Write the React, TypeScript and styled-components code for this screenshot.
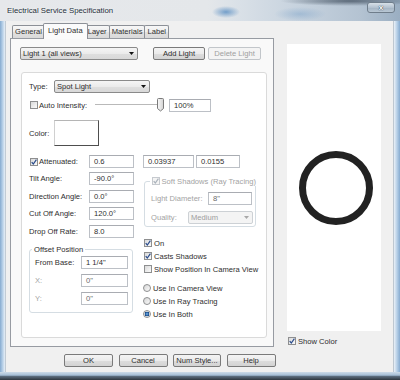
import React from 'react'
import styled, { createGlobalStyle } from 'styled-components'

const GlobalStyle = createGlobalStyle`
    * { box-sizing: border-box; }
    html, body { margin: 0; padding: 0; background: #ffffff; }
    body {
        font-family : "Liberation Sans", Arial, sans-serif;
        font-size   : 7.6px;
        color       : #2e2e2e;
    }
`

const tabs = ['General', 'Light Data', 'Layer', 'Materials', 'Label']

const ArrowDown = ({ color = '#111' }: { color?: string }) => (
    <svg width="5" height="3" viewBox="0 0 5 3">
        <path d="M0 0 H5 L2.5 3 Z" fill={color} />
    </svg>
)

const CheckBox = ({ checked, disabled }: { checked?: boolean; disabled?: boolean }) => (
    <Box $disabled={disabled}>
        {checked && (
            <svg width="6" height="6" viewBox="0 0 6 6">
                <path d="M0.7 3.2 L2.3 5 L5.4 0.7" fill="none" stroke={disabled ? '#aab2bb' : '#2a4c8c'} strokeWidth="1.2" />
            </svg>
        )}
    </Box>
)

const Slider = () => (
    <svg width="70" height="14" viewBox="0 0 70 14">
        <rect x="0" y="6" width="63" height="1" fill="#b9b9b9" />
        <rect x="0" y="7" width="63" height="1" fill="#ffffff" />
        <defs>
            <linearGradient id="thumb" x1="0" x2="1" y1="0" y2="0">
                <stop offset="0" stopColor="#fafafa" />
                <stop offset="1" stopColor="#d2d2d2" />
            </linearGradient>
        </defs>
        <path d="M62.5 1.5 Q62.5 0.5 63.5 0.5 H67.5 Q68.5 0.5 68.5 1.5 V10.5 L65.5 13 L62.5 10.5 Z" fill="url(#thumb)" stroke="#7a7a7a" strokeWidth="1" />
    </svg>
)

export default function App() {
    return (
        <>
            <GlobalStyle />
            <Window>
                <TitleBar>
                    <Title>Electrical Service Specification</Title>
                    <CloseButton>x</CloseButton>
                </TitleBar>
                <Frame>
                    <SideEdge $side="left" />
                    <Client>
                        <MainRow>
                            <TabArea>
                                <TabStrip>
                                    {tabs.map(t => (
                                        <Tab key={t} $active={t === 'Light Data'}>{t}</Tab>
                                    ))}
                                </TabStrip>
                                <Panel>
                                    <TopRow>
                                        <Combo $w={118}>
                                            <span>Light 1 (all views)</span>
                                            <ArrowDown />
                                        </Combo>
                                        <Button $w={52} $ml={15}>Add Light</Button>
                                        <Button $w={53} $ml={3} $disabled>Delete Light</Button>
                                    </TopRow>
                                    <Card>
                                        <Row $h={13}>
                                            <Label $w={25}>Type:</Label>
                                            <Combo $w={96}>
                                                <span>Spot Light</span>
                                                <ArrowDown />
                                            </Combo>
                                        </Row>
                                        <Row $h={14} $mt={5}>
                                            <CheckLabel $w={65} $ml={1}>
                                                <CheckBox />
                                                <span>Auto Intensity:</span>
                                            </CheckLabel>
                                            <Slider />
                                            <TextBox $w={42} $ml={4}>100%</TextBox>
                                        </Row>
                                        <Row $h={26} $mt={8}>
                                            <Label $w={25}>Color:</Label>
                                            <Swatch />
                                        </Row>
                                        <Row $h={13} $mt={9}>
                                            <CheckLabel $w={59} $ml={1}>
                                                <CheckBox checked />
                                                <span>Attenuated:</span>
                                            </CheckLabel>
                                            <TextBox $w={45}>0.6</TextBox>
                                            <TextBox $w={51} $ml={9}>0.03937</TextBox>
                                            <TextBox $w={44} $ml={2}>0.0155</TextBox>
                                        </Row>
                                        <Columns>
                                            <LeftCol>
                                                <Row $h={13}>
                                                    <Label $w={60}>Tilt Angle:</Label>
                                                    <TextBox $w={45}>-90.0°</TextBox>
                                                </Row>
                                                <Row $h={13}>
                                                    <Label $w={60}>Direction Angle:</Label>
                                                    <TextBox $w={45}>0.0°</TextBox>
                                                </Row>
                                                <Row $h={13}>
                                                    <Label $w={60}>Cut Off Angle:</Label>
                                                    <TextBox $w={45}>120.0°</TextBox>
                                                </Row>
                                                <Row $h={13}>
                                                    <Label $w={60}>Drop Off Rate:</Label>
                                                    <TextBox $w={45}>8.0</TextBox>
                                                </Row>
                                                <Group $w={104} $mt={2.5} $pad="2.5px 4px 7px 5px" $gap={5}>
                                                    <Legend>Offset Position</Legend>
                                                    <Row $h={13}>
                                                        <Label $w={46}>From Base:</Label>
                                                        <TextBox $w={47}>1 1/4"</TextBox>
                                                    </Row>
                                                    <Row $h={13}>
                                                        <Label $w={46} $disabled>X:</Label>
                                                        <TextBox $w={47} $dim>0"</TextBox>
                                                    </Row>
                                                    <Row $h={13}>
                                                        <Label $w={46} $disabled>Y:</Label>
                                                        <TextBox $w={47} $dim>0"</TextBox>
                                                    </Row>
                                                </Group>
                                            </LeftCol>
                                            <RightCol>
                                                <Group $w={112} $mt={4.5} $pad="6.5px 3px 2px 6px" $gap={6}>
                                                    <Legend $check>
                                                        <CheckBox checked disabled />
                                                        <DimText>Soft Shadows (Ray Tracing)</DimText>
                                                    </Legend>
                                                    <Row $h={13}>
                                                        <Label $w={57} $disabled>Light Diameter:</Label>
                                                        <TextBox $w={44} $dim>8"</TextBox>
                                                    </Row>
                                                    <Row $h={13}>
                                                        <Label $w={37} $disabled>Quality:</Label>
                                                        <Combo $w={65} $disabled>
                                                            <span>Medium</span>
                                                            <ArrowDown color="#a8a8a8" />
                                                        </Combo>
                                                    </Row>
                                                </Group>
                                                <OptionList $mt={11.5}>
                                                    <Option><CheckBox checked /><span>On</span></Option>
                                                    <Option><CheckBox checked /><span>Casts Shadows</span></Option>
                                                    <Option><CheckBox /><span>Show Position In Camera View</span></Option>
                                                </OptionList>
                                                <OptionList $mt={10} $shift={-1}>
                                                    <Option><RadioDot /><span>Use In Camera View</span></Option>
                                                    <Option><RadioDot /><span>Use In Ray Tracing</span></Option>
                                                    <Option><RadioDot $selected /><span>Use In Both</span></Option>
                                                </OptionList>
                                            </RightCol>
                                        </Columns>
                                    </Card>
                                </Panel>
                            </TabArea>
                            <PreviewCol>
                                <Preview>
                                    <svg width="78" height="78" viewBox="0 0 78 78">
                                        <circle cx="39" cy="39" r="33.5" fill="none" stroke="#222222" strokeWidth="7" />
                                    </svg>
                                </Preview>
                                <Option $ml={1} $mt={5.5}>
                                    <CheckBox checked />
                                    <span>Show Color</span>
                                </Option>
                            </PreviewCol>
                        </MainRow>
                        <ButtonRow>
                            <Button $w={49}>OK</Button>
                            <Button $w={49}>Cancel</Button>
                            <Button $w={48}>Num Style...</Button>
                            <Button $w={49}>Help</Button>
                        </ButtonRow>
                    </Client>
                    <SideEdge $side="right" />
                </Frame>
                <BottomEdge />
            </Window>
        </>
    )
}

const Window = styled.div`
    width          : 400px;
    height         : 380px;
    display        : flex;
    flex-direction : column;
    overflow       : hidden;
    background     : #f0f0f0;
`

const TitleBar = styled.div`
    height          : 21px;
    flex            : none;
    display         : flex;
    align-items     : center;
    justify-content : space-between;
    padding         : 0 5px 0 7px;
    background      :
        radial-gradient(ellipse 14px 6px at 226px 12px, rgba(96, 146, 196, 0.85), rgba(96, 146, 196, 0)),
        radial-gradient(ellipse 26px 7px at 300px 14px, rgba(120, 160, 200, 0.45), rgba(120, 160, 200, 0)),
        radial-gradient(ellipse 70px 5px at 350px 1px, rgba(60, 74, 90, 0.75), rgba(60, 74, 90, 0)),
        linear-gradient(90deg, #e6e8eb 0%, #e4e7ea 52%, #d9e0e7 60%, #c6d2de 75%, #b4c3d2 90%, #9aaec2 100%);
`

const Title = styled.div`
    font-size   : 7.8px;
    color       : #26313b;
    text-shadow : 0 0 3px rgba(255, 255, 255, 0.9);
`

const CloseButton = styled.div`
    align-self      : flex-start;
    margin-top      : 2px;
    width           : 28px;
    height          : 11px;
    display         : flex;
    align-items     : center;
    justify-content : center;
    border          : 1px solid #6f7d8b;
    border-radius   : 3px;
    background      : linear-gradient(#d7e0e8, #b4c2d0 50%, #a3b3c3 51%, #b9c7d4);
    color           : #ffffff;
    font-weight     : bold;
    font-size       : 8px;
    line-height     : 8px;
    text-shadow     : 0 0 1px #2c3a48, 0 0 1px #2c3a48;
`

const Frame = styled.div`
    flex    : 1;
    display : flex;
`

const SideEdge = styled.div<{ $side: 'left' | 'right' }>`
    width      : ${p => (p.$side === 'left' ? 6 : 7)}px;
    flex       : none;
    background : ${p => p.$side === 'left'
        ? 'linear-gradient(90deg, #86abd0 0%, #b9d1e8 45%, #e3ecf5 80%, #a9b3bd 100%)'
        : 'linear-gradient(90deg, #a9b3bd 0%, #e3ecf5 20%, #b9d1e8 55%, #86abd0 100%)'};
`

const BottomEdge = styled.div`
    height     : 8px;
    flex       : none;
    background : linear-gradient(180deg, #cddbe8 0%, #a4bdd5 40%, #5b6c7d 55%, #2e363e 100%);
`

const Client = styled.div`
    flex           : 1;
    display        : flex;
    flex-direction : column;
    padding        : 2px 0 0 4px;
    background     : #f0f0f0;
`

const MainRow = styled.div`
    height  : 324px;
    display : flex;
`

const TabArea = styled.div`
    width          : 264px;
    display        : flex;
    flex-direction : column;
`

const TabStrip = styled.div`
    height       : 15px;
    display      : flex;
    align-items  : flex-end;
    padding-left : 2px;
`

const Tab = styled.div<{ $active?: boolean }>`
    height        : ${p => (p.$active ? 16 : 13)}px;
    padding       : 0 ${p => (p.$active ? 4 : 2)}px;
    margin        : ${p => (p.$active ? '0 -2px -1px -2px' : '0 0 0 -1px')};
    line-height   : ${p => (p.$active ? 14 : 12)}px;
    text-align    : center;
    border        : 1px solid #8c9097;
    border-bottom : none;
    border-radius : 2px 2px 0 0;
    background    : ${p => (p.$active ? '#fbfbfb' : 'linear-gradient(#f7f7f7, #ededed 50%, #e1e1e1 51%, #d9d9d9)')};
    position      : relative;
    z-index       : ${p => (p.$active ? 1 : 0)};

    &:first-child { margin-left : 0; }
`

const Panel = styled.div`
    flex           : 1;
    display        : flex;
    flex-direction : column;
    border         : 1px solid #979ba2;
    background     : #f9f9f9;
    padding        : 8px 6px 8px 9px;
`

const TopRow = styled.div`
    height  : 13px;
    display : flex;
`

const Card = styled.div`
    flex           : 1;
    margin         : 12px 0 0 1px;
    width          : 246px;
    display        : flex;
    flex-direction : column;
    padding        : 7px 0 0 7px;
    border         : 1px solid #dadada;
    border-radius  : 3px;
    background     : #ffffff;
`

const Row = styled.div<{ $h: number; $mt?: number }>`
    height      : ${p => p.$h}px;
    margin-top  : ${p => p.$mt ?? 0}px;
    display     : flex;
    align-items : center;
    flex        : none;
`

const Label = styled.span<{ $w: number; $disabled?: boolean }>`
    width       : ${p => p.$w}px;
    flex        : none;
    white-space : nowrap;
    color       : ${p => (p.$disabled ? '#a3a3a3' : '#2e2e2e')};
`

const DimText = styled.span`
    color : #a3a3a3;
`

const CheckLabel = styled.span<{ $w: number; $ml?: number }>`
    width       : ${p => p.$w}px;
    margin-left : ${p => p.$ml ?? 0}px;
    flex        : none;
    display     : flex;
    align-items : center;
    gap         : 1px;
    white-space : nowrap;
`

const Box = styled.span<{ $disabled?: boolean }>`
    width           : 8px;
    height          : 8px;
    flex            : none;
    display         : flex;
    align-items     : center;
    justify-content : center;
    border          : 1px solid ${p => (p.$disabled ? '#c6cacf' : '#8e8f90')};
    background      : ${p => (p.$disabled ? '#f4f4f4' : 'linear-gradient(135deg, #d9d9d9, #fbfbfb)')};
`

const RadioDot = styled.span<{ $selected?: boolean }>`
    width         : 8px;
    height        : 8px;
    flex          : none;
    border-radius : 50%;
    border        : 1px solid #8e8f90;
    background    : ${p => (p.$selected
        ? 'radial-gradient(circle at 50% 50%, #8ec0ec 0, #2f6db0 1.3px, #1d4b85 2.2px, #f2f2f2 2.6px, #dcdcdc 100%)'
        : 'linear-gradient(135deg, #d6d6d6, #fbfbfb)')};
`

const TextBox = styled.span<{ $w: number; $ml?: number; $dim?: boolean }>`
    width         : ${p => p.$w}px;
    height        : 13px;
    margin-left   : ${p => p.$ml ?? 0}px;
    flex          : none;
    padding-left  : 4px;
    line-height   : 11px;
    white-space   : nowrap;
    border        : 1px solid #bcc0c6;
    border-top    : 1px solid #a9acb2;
    background    : #ffffff;
    color         : ${p => (p.$dim ? '#6a6a6a' : '#2e2e2e')};
`

const Swatch = styled.span`
    width         : 45px;
    height        : 26px;
    flex          : none;
    background    : #ffffff;
    border-top    : 1px solid #b5b5b5;
    border-left   : 1px solid #d0d0d0;
    border-right  : 1px solid #4e4e4e;
    border-bottom : 1px solid #4e4e4e;
`

const Combo = styled.div<{ $w: number; $disabled?: boolean }>`
    width           : ${p => p.$w}px;
    height          : 13px;
    flex            : none;
    display         : flex;
    align-items     : center;
    justify-content : space-between;
    padding         : 0 3px 0 2px;
    white-space     : nowrap;
    border          : 1px solid ${p => (p.$disabled ? '#cdd1d5' : '#8a8a8a')};
    border-radius   : 2px;
    color           : ${p => (p.$disabled ? '#9d9d9d' : '#2e2e2e')};
    background      : ${p => (p.$disabled ? '#f4f4f4' : 'linear-gradient(#f5f5f5, #ebebeb 50%, #dfdfdf 51%, #d8d8d8)')};
`

const Button = styled.div<{ $w: number; $ml?: number; $disabled?: boolean }>`
    width         : ${p => p.$w}px;
    height        : 13px;
    margin-left   : ${p => p.$ml ?? 0}px;
    flex          : none;
    text-align    : center;
    line-height   : 11px;
    white-space   : nowrap;
    border        : 1px solid ${p => (p.$disabled ? '#c2c6ca' : '#7a7a7a')};
    border-radius : 2px;
    color         : ${p => (p.$disabled ? '#a0a0a0' : '#2e2e2e')};
    background    : ${p => (p.$disabled ? '#f4f4f4' : 'linear-gradient(#f4f4f4, #ebebeb 50%, #dddddd 51%, #d3d3d3)')};
`

const Columns = styled.div`
    margin-top : 4px;
    display    : flex;
`

const LeftCol = styled.div`
    width          : 104px;
    display        : flex;
    flex-direction : column;
    gap            : 4.5px;
`

const RightCol = styled.div`
    width          : 112px;
    margin-left    : 11px;
    display        : flex;
    flex-direction : column;
`

const Group = styled.fieldset<{ $w: number; $mt: number; $pad: string; $gap: number }>`
    width          : ${p => p.$w}px;
    margin         : ${p => p.$mt}px 0 0 0;
    padding        : ${p => p.$pad};
    min-width      : 0;
    border         : 1px solid #d5dde3;
    border-radius  : 3px;
    display        : flex;
    flex-direction : column;
    gap            : ${p => p.$gap}px;
`

const Legend = styled.legend<{ $check?: boolean }>`
    padding     : 0 2px;
    margin-left : ${p => (p.$check ? -1 : -3)}px;
    line-height : 9px;
    height      : 9px;
    display     : flex;
    align-items : center;
    gap         : 1.5px;
    white-space : nowrap;
`

const OptionList = styled.div<{ $mt: number; $shift?: number }>`
    margin-top     : ${p => p.$mt}px;
    margin-left    : ${p => p.$shift ?? 0}px;
    display        : flex;
    flex-direction : column;
    gap            : 4px;
`

const Option = styled.div<{ $ml?: number; $mt?: number }>`
    height      : 9px;
    margin-left : ${p => p.$ml ?? 0}px;
    margin-top  : ${p => p.$mt ?? 0}px;
    display     : flex;
    align-items : center;
    gap         : 2px;
    white-space : nowrap;
`

const PreviewCol = styled.div`
    width          : 94px;
    margin-left    : 13px;
    padding-top    : 21px;
    display        : flex;
    flex-direction : column;
`

const Preview = styled.div`
    height          : 287px;
    display         : flex;
    align-items     : center;
    justify-content : center;
    padding-left    : 3px;
    background      : #ffffff;
`

const ButtonRow = styled.div`
    height      : 13px;
    margin      : 7px 0 0 54px;
    display     : flex;
    gap         : 5.5px;
`
